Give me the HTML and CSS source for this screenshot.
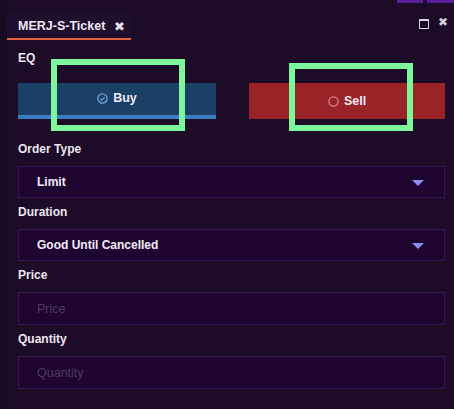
FILE: index.html
```html
<!DOCTYPE html>
<html>
<head>
<meta charset="utf-8">
<link rel="stylesheet" href="styles.css">
</head>
<body>
<div class="window">
  <div class="outer-tabs">
    <span class="outer-tab"></span>
    <span class="outer-tab outer-tab-wide"></span>
  </div>
  <div class="header">
    <div class="tab">
      <span class="tab-title">MERJ-S-Ticket</span>
      <span class="tab-close">✖</span>
    </div>
    <div class="controls">
      <span class="maximize"></span>
      <span class="close">✖</span>
    </div>
  </div>
  <div class="content">
    <div class="label eq">EQ</div>
    <div class="sides">
      <div class="side buy">
        <svg class="side-icon" viewBox="0 0 10 10" width="11" height="11">
          <circle cx="5" cy="5" r="4.2" fill="none" stroke="#6f9fd6" stroke-width="1.2"/>
          <path d="M3 5.1 L4.4 6.4 L7 3.8" fill="none" stroke="#6f9fd6" stroke-width="1.1"/>
        </svg>
        <span>Buy</span>
      </div>
      <div class="side sell">
        <svg class="side-icon" viewBox="0 0 10 10" width="11" height="11">
          <circle cx="5" cy="5" r="4.2" fill="none" stroke="#d98a8a" stroke-width="1.1"/>
        </svg>
        <span>Sell</span>
      </div>
    </div>
    <div class="field">
      <div class="label">Order Type</div>
      <div class="box select"><span>Limit</span><span class="caret"></span></div>
    </div>
    <div class="field">
      <div class="label">Duration</div>
      <div class="box select"><span>Good Until Cancelled</span><span class="caret"></span></div>
    </div>
    <div class="field">
      <div class="label">Price</div>
      <div class="box input placeholder">Price</div>
    </div>
    <div class="field">
      <div class="label">Quantity</div>
      <div class="box input placeholder">Quantity</div>
    </div>
  </div>
  <div class="highlight highlight-buy"></div>
  <div class="highlight highlight-sell"></div>
</div>
</body>
</html>
```
FILE: styles.css
```css
* { box-sizing: border-box; }
html, body { margin: 0; padding: 0; background: #1c0c27; }
body { font-family: "Liberation Sans", Arial, sans-serif; }

.window {
  position: relative;
  width: 454px;
  height: 409px;
  background: #1c0c27;
  border-left: 7px solid #180a21;
  overflow: hidden;
  color: #ece4f2;
}

.outer-tabs {
  position: absolute;
  top: 0;
  right: 0;
  display: flex;
  gap: 4px;
}
.outer-tab { width: 26px; height: 3px; background: #5b1f9c; }
.outer-tab-wide { width: 27px; }

.header {
  display: flex;
  justify-content: space-between;
  align-items: flex-start;
  padding-top: 13px;
}
.tab {
  width: 124px;
  height: 27px;
  background: #1e0f2c;
  border-bottom: 2px solid #e3623f;
  display: flex;
  align-items: center;
  padding-left: 11px;
  gap: 9px;
}
.tab-title { font-size: 12.5px; font-weight: bold; color: #efe8f4; }
.tab-close { font-size: 13px; color: #e6e0ea; margin-top: 1px; }

.controls {
  display: flex;
  align-items: center;
  gap: 9px;
  padding-right: 6px;
  padding-top: 2px;
}
.maximize {
  width: 10px;
  height: 10px;
  border: 1.5px solid #d8d2dc;
  border-top-width: 2px;
  margin-top: 3px;
}
.close { font-size: 12px; color: #d4ced8; }

.content {
  padding: 10px 9px 0 11px;
}
.label {
  font-size: 12px;
  font-weight: bold;
  line-height: 16px;
  height: 16px;
  color: #ece6f0;
}
.eq { margin-bottom: 17px; }

.sides {
  display: grid;
  grid-template-columns: 198px 196px;
  column-gap: 33px;
  margin-bottom: 22px;
}
.side {
  height: 36px;
  display: flex;
  align-items: center;
  justify-content: center;
  gap: 5px;
  font-size: 12.5px;
  font-weight: bold;
  color: #f1eaf4;
}
.buy {
  background: #1b4065;
  border-bottom: 4px solid #3b7cc0;
  padding-top: 2px;
}
.buy span { margin-top: -4px; }
.buy .side-icon { margin-top: -4px; }
.sell { background: #9a2327; }
.side-icon { display: block; }

.field { margin-bottom: 6px; }
.field .label { margin-bottom: 9px; }
.box {
  height: 33px;
  background: #1e0631;
  border: 1px solid #341650;
  display: flex;
  align-items: center;
  justify-content: space-between;
  padding: 0 20px 0 18px;
  font-size: 12px;
  font-weight: bold;
  color: #f2ecf6;
}
.select { height: 32px; }
.placeholder { font-weight: normal; color: #4d3a5b; font-size: 12.5px; }
.caret {
  width: 0;
  height: 0;
  border-left: 6px solid transparent;
  border-right: 6px solid transparent;
  border-top: 6px solid #8a8cf2;
  margin-top: 2px;
}

.highlight {
  position: absolute;
  border: 6px solid #7df59a;
}
.highlight-buy { left: 44px; top: 59px; width: 134px; height: 72px; }
.highlight-sell { left: 282px; top: 63px; width: 124px; height: 68px; }
```
